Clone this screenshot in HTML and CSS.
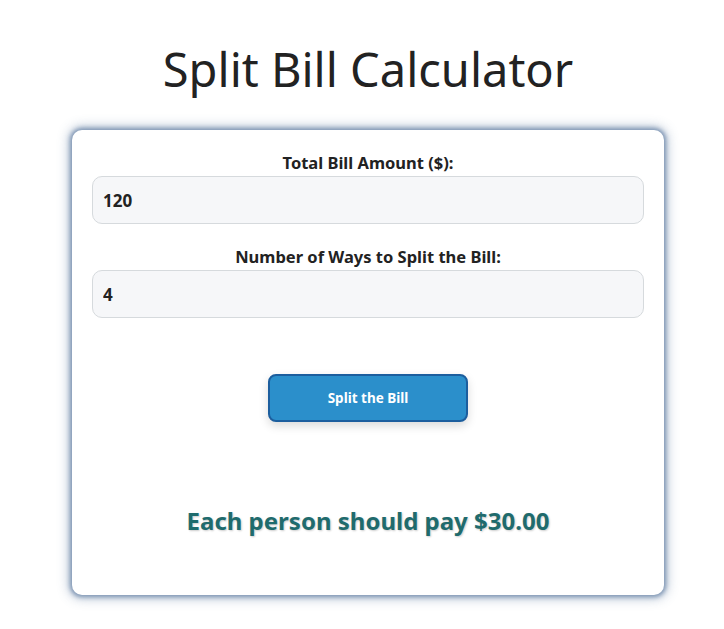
FILE: index.html
```html
<!DOCTYPE html>
<html lang="en">
<head>
<meta charset="utf-8">
<title>Split Bill Calculator</title>
<link rel="stylesheet" href="styles.css">
</head>
<body>
<main class="page">
  <h1 class="title">Split Bill Calculator</h1>
  <section class="card">
    <div class="field">
      <label class="label" for="total">Total Bill Amount ($):</label>
      <input class="input" id="total" type="text" value="120">
    </div>
    <div class="field">
      <label class="label" for="ways">Number of Ways to Split the Bill:</label>
      <input class="input" id="ways" type="text" value="4">
    </div>
    <div class="actions">
      <button class="button" type="button">Split the Bill</button>
    </div>
    <p class="result">Each person should pay $30.00</p>
  </section>
</main>
</body>
</html>
```

FILE: styles.css
```css
html, body {
  margin: 0;
  padding: 0;
  background: #ffffff;
}

body {
  font-family: "Noto Sans", "Open Sans", "Liberation Sans", sans-serif;
  color: #222222;
}

.page {
  padding: 40px 0 30px 12px;
  display: flex;
  flex-direction: column;
  align-items: center;
}

.title {
  margin: 0 0 32px;
  font-size: 47px;
  line-height: 58px;
  font-weight: 400;
  color: #222222;
}

.card {
  box-sizing: border-box;
  width: 592px;
  padding: 22px 20px 20px;
  background: #ffffff;
  border-radius: 10px;
  box-shadow: 0 0 4px 2px rgba(85, 115, 155, 0.65), 0 0 12px 3px rgba(85, 115, 155, 0.45);
}

.field {
  display: flex;
  flex-direction: column;
  margin-bottom: 22px;
}

.label {
  text-align: center;
  font-size: 16.5px;
  line-height: 22px;
  font-weight: 700;
  color: #222222;
  margin-bottom: 2px;
}

.input {
  box-sizing: border-box;
  height: 48px;
  width: 100%;
  padding: 0 10px;
  font-family: inherit;
  font-size: 17px;
  font-weight: 700;
  color: #222222;
  background: #f6f7f9;
  border: 1px solid #d6dadd;
  border-radius: 10px;
  outline: none;
}

.actions {
  display: flex;
  justify-content: center;
  padding-top: 34px;
}

.button {
  box-sizing: border-box;
  width: 200px;
  height: 48px;
  font-family: inherit;
  font-size: 13.5px;
  font-weight: 700;
  color: #ffffff;
  background: #2b8fcb;
  border: 2px solid #1c5e9e;
  border-radius: 8px;
  box-shadow: 0 4px 10px rgba(0, 0, 0, 0.15);
  cursor: pointer;
}

.result {
  margin: 82px 0 37px;
  text-align: center;
  font-size: 24px;
  line-height: 34px;
  font-weight: 700;
  color: #1f6b6d;
  text-shadow: 1px 1px 2px rgba(0, 0, 0, 0.2);
}
```
